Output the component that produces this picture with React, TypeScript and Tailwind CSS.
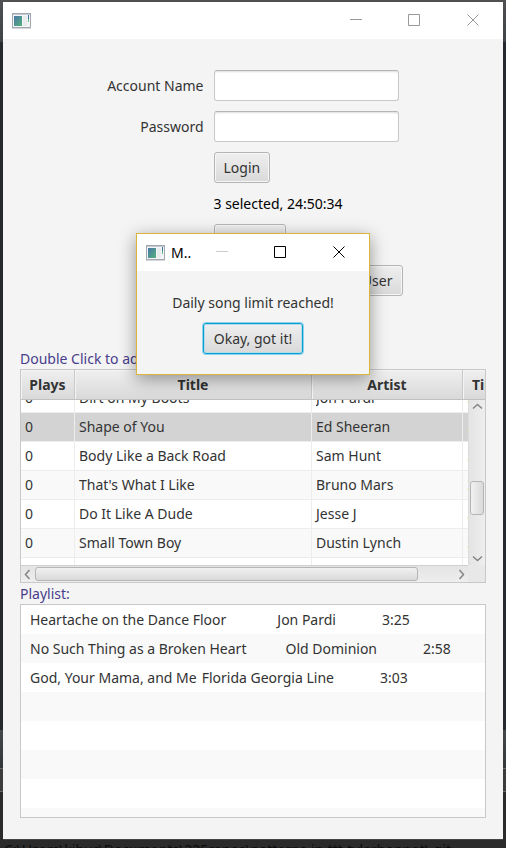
import type { ReactNode } from "react";

type Song = { title: string; artist: string; time: string };

const songs: Song[] = [
  { title: "Shape of You", artist: "Ed Sheeran", time: "3:53" },
  { title: "Body Like a Back Road", artist: "Sam Hunt", time: "2:45" },
  { title: "That's What I Like", artist: "Bruno Mars", time: "3:26" },
  { title: "Do It Like A Dude", artist: "Jesse J", time: "3:15" },
  { title: "Small Town Boy", artist: "Dustin Lynch", time: "3:22" },
];

const playlist = [
  { text: "Heartache on the Dance Floor", artist: "Jon Pardi", time: "3:25", gap: "gap-x-[51px]" },
  { text: "No Such Thing as a Broken Heart", artist: "Old Dominion", time: "2:58", gap: "gap-x-[39px]" },
  { text: "God, Your Mama, and Me", artist: "Florida Georgia Line", time: "3:03", gap: "gap-x-[5px]" },
];

const buttonStyle =
  "h-[31px] rounded-[3px] border border-[#b5b5b5] bg-linear-to-b from-[#efefef] to-[#d9d9d9] px-[9px] leading-5 shadow-[inset_0_0_0_1px_#f6f6f6]";

function AppIcon() {
  return (
    <svg className="h-4 w-[19px] shrink-0" viewBox="0 0 19 16" aria-hidden="true">
      <defs>
        <linearGradient id="pane" x1="0" y1="0" x2="1" y2="1">
          <stop offset="0" stopColor="#4a78a8" />
          <stop offset="1" stopColor="#55b07c" />
        </linearGradient>
      </defs>
      <rect x="0.5" y="0.5" width="18" height="14" fill="#f4f5f6" stroke="#a3a8b0" />
      <path d="M1 1.5h17" stroke="#c4cad4" />
      <rect x="2" y="3" width="8" height="10" fill="url(#pane)" />
      <rect x="11" y="3" width="4" height="10" fill="#e9ebec" />
      <rect x="16" y="2" width="1" height="4" fill="#3d74a6" />
      <rect x="16" y="6" width="1" height="3" fill="#62b98a" />
      <path d="M0 15.5h19" stroke="#d5d7da" />
    </svg>
  );
}

function WindowButtons({ minimize, other }: { minimize: string; other: string }) {
  return (
    <div className="ml-auto flex items-center gap-[46px]">
      <button type="button" aria-label="Minimize" className={minimize}>
        <svg className="size-[13px]" viewBox="0 0 13 13" stroke="currentColor" fill="none">
          <path d="M1 5.5h12" />
        </svg>
      </button>
      <button type="button" aria-label="Maximize" className={other}>
        <svg className="size-[13px]" viewBox="0 0 13 13" stroke="currentColor" fill="none">
          <path d="M0.5 0.5h11v11h-11z" />
        </svg>
      </button>
      <button type="button" aria-label="Close" className={other}>
        <svg className="size-[13px]" viewBox="0 0 13 13" stroke="currentColor" fill="none">
          <path d="M0.5 0.5l11 11M11.5 0.5l-11 11" />
        </svg>
      </button>
    </div>
  );
}

function Arrow({ d }: { d: string }) {
  return (
    <svg className="size-[11px]" viewBox="0 0 11 11" fill="none" stroke="#858585" strokeWidth="1.5" aria-hidden="true">
      <path d={d} />
    </svg>
  );
}

function Head({ children, className }: { children: ReactNode; className: string }) {
  return (
    <th
      scope="col"
      className={
        "h-[30px] overflow-hidden border-r border-b border-r-[#c8c8c8] border-b-[#c0c0c0] bg-linear-to-b from-[#efefef] to-[#d9d9d9] p-0 font-bold whitespace-nowrap shadow-[inset_1px_1px_0_#f4f4f4] " +
        className
      }
    >
      {children}
    </th>
  );
}

function SongTable() {
  return (
    <div className="grid grid-cols-[minmax(0,1fr)_17px] grid-rows-[195px_17px] border border-[#c8c8c8] bg-white">
      <div className="col-span-2 col-start-1 row-start-1 overflow-hidden">
        <table className="w-[542px] table-fixed border-separate border-spacing-0">
          <colgroup>
            <col className="w-[54px]" />
            <col className="w-[237px]" />
            <col className="w-[151px]" />
            <col className="w-[100px]" />
          </colgroup>
          <thead>
            <tr>
              <Head className="text-center">Plays</Head>
              <Head className="text-center">Title</Head>
              <Head className="text-center">Artist</Head>
              <Head className="pl-[9px] text-left">Time</Head>
            </tr>
          </thead>
          <tbody>
            <tr>
              {["0", "Dirt on My Boots", "Jon Pardi", "3:22"].map((text, i) => (
                <td key={i} className="border-r border-b border-[#ededed] p-0 pl-1 last:text-[#e5d88a]">
                  <div className="flex h-3 items-end overflow-hidden">
                    <span className="h-7 leading-7">{text}</span>
                  </div>
                </td>
              ))}
            </tr>
            {songs.map((song, i) => (
              <tr key={song.title} className={i === 0 ? "bg-[#d3d3d3]" : i % 2 === 0 ? "bg-[#f9f9f9]" : "bg-white"}>
                {["0", song.title, song.artist, song.time].map((text, j) => (
                  <td
                    key={j}
                    className="h-[29px] border-r border-b border-[#ededed] p-0 pl-1 leading-7 last:text-[#e5d88a]"
                  >
                    {text}
                  </td>
                ))}
              </tr>
            ))}
            <tr>
              {[0, 1, 2, 3].map((i) => (
                <td key={i} className="h-[29px] border-r border-[#ededed] p-0" />
              ))}
            </tr>
          </tbody>
        </table>
      </div>
      <div className="z-10 col-start-2 row-start-1 mt-[30px] flex flex-col items-center border-l border-[#dcdcdc] bg-linear-to-r from-[#e4e4e4] to-[#eeeeee] py-px">
        <Arrow d="M1 7.5l4.5-4 4.5 4" />
        <div className="mt-[69px] h-[34px] w-[14px] rounded-[3px] border border-[#b5b5b5] bg-linear-to-r from-[#f1f1f1] to-[#dadada]" />
        <div className="mt-auto">
          <Arrow d="M1 3.5l4.5 4 4.5-4" />
        </div>
      </div>
      <div className="col-start-1 row-start-2 flex items-center border-t border-[#d0d0d0] bg-linear-to-b from-[#e4e4e4] to-[#eeeeee] px-px">
        <Arrow d="M7.5 1l-4 4.5 4 4.5" />
        <div className="ml-0.5 h-[14px] w-[86%] rounded-[3px] border border-[#b5b5b5] bg-linear-to-b from-[#f1f1f1] to-[#dadada]" />
        <div className="ml-auto">
          <Arrow d="M3.5 1l4 4.5-4 4.5" />
        </div>
      </div>
      <div className="col-start-2 row-start-2 bg-[#e8e8e8]" />
    </div>
  );
}

function Dialog() {
  return (
    <div
      role="dialog"
      aria-label="Message"
      className="absolute top-[233px] left-1/2 z-20 w-[234px] -translate-x-1/2 border border-[#dcb63c] bg-[#f4f4f4] shadow-[0_4px_16px_rgba(0,0,0,0.4)]"
    >
      <div className="flex h-[37px] items-center bg-white pr-[23px] pl-[9px]">
        <AppIcon />
        <span className="ml-1.5 text-black">M..</span>
        <WindowButtons minimize="text-[#cccccc]" other="text-black" />
      </div>
      <div className="flex flex-col items-center gap-[10px] pt-[21px] pb-5">
        <p className="leading-[21px]">Daily song limit reached!</p>
        <button
          type="button"
          className="h-[31px] rounded-[3px] border border-[#039ed3] bg-linear-to-b from-[#efefef] to-[#d9d9d9] px-[10px] leading-5 shadow-[0_0_0_1px_#8fd3ea,inset_0_0_0_1px_#b5dcea]"
        >
          Okay, got it!
        </button>
      </div>
    </div>
  );
}

/* The darkened editor window that shows at the edges behind the app. */
function Backdrop() {
  return (
    <div className="absolute inset-0 flex flex-col bg-[#25282c]" aria-hidden="true">
      <div className="h-[42px] bg-linear-to-b from-[#4e5052] to-[#404347]" />
      <div className="flex-1" />
      <div className="h-[38px] bg-linear-to-b from-[#45484b] to-[#34373a]" />
      <div className="h-6 border-y border-[#6a6a6a] bg-[#3c3c3c]" />
      <div className="h-14 bg-[#2b2b2b]" />
    </div>
  );
}

export default function App() {
  const input =
    "h-[31px] w-[185px] rounded-[3px] border border-[#c8c8c8] border-t-[#b5b5b5] bg-white px-2 shadow-[inset_0_2px_2px_-1px_#dddddd] outline-none";
  return (
    <div className="relative isolate flex h-screen flex-col overflow-hidden px-[3px] pt-0.5 font-['Noto_Sans','Open_Sans',sans-serif] text-sm text-[#333333]">
      <Backdrop />
      <main className="z-10 flex min-h-0 flex-1 flex-col bg-[#f4f4f4]">
        <header className="flex h-[37px] shrink-0 items-center bg-white pr-[23px] pl-[9px]">
          <AppIcon />
          <WindowButtons minimize="text-[#999999]" other="text-[#999999]" />
        </header>
        <form className="mt-[31px] grid grid-cols-[100px_189px] items-center justify-center gap-[10px]">
          <label htmlFor="account" className="text-right">
            Account Name
          </label>
          <input id="account" type="text" className={input} />
          <label htmlFor="password" className="text-right">
            Password
          </label>
          <input id="password" type="password" className={input} />
          <button type="button" className={buttonStyle + " col-start-2 justify-self-start"}>
            Login
          </button>
          <p className="col-start-2 leading-[21px] text-black">3 selected, 24:50:34</p>
          <button type="button" className={buttonStyle + " col-start-2 justify-self-start"}>
            Log Out
          </button>
          <button type="button" className={buttonStyle + " col-start-2 justify-self-end"}>
            Add User
          </button>
        </form>
        <section className="mt-[52px] flex min-h-0 flex-1 flex-col px-[17px] pb-[21px]">
          <h2 className="leading-[21px] text-[#483d8b]">Double Click to add a song</h2>
          <SongTable />
          <h2 className="leading-[21px] text-[#483d8b]">Playlist:</h2>
          <ul className="min-h-0 flex-1 overflow-hidden border border-[#c8c8c8] bg-white">
            {playlist.map((item) => (
              <li key={item.text} className="flex h-[29px] items-center gap-[46px] pl-[9px] whitespace-nowrap even:bg-[#f9f9f9]">
                <span className={"flex " + item.gap}>
                  <span>{item.text}</span>
                  <span>{item.artist}</span>
                </span>
                <span>{item.time}</span>
              </li>
            ))}
            {[0, 1, 2, 3, 4].map((i) => (
              <li key={i} aria-hidden="true" className="h-[29px] even:bg-[#f9f9f9]" />
            ))}
          </ul>
        </section>
      </main>
      <footer className="z-10 h-[9px] shrink-0 overflow-hidden border-t border-[#444444] bg-[#2b2b2b] pl-px leading-5 whitespace-nowrap text-[#0c0c0c]">
        C:\Users\kibur\Documents\335repos\patterns-in-ttt-tylerbonnot\.git
      </footer>
      <Dialog />
    </div>
  );
}
